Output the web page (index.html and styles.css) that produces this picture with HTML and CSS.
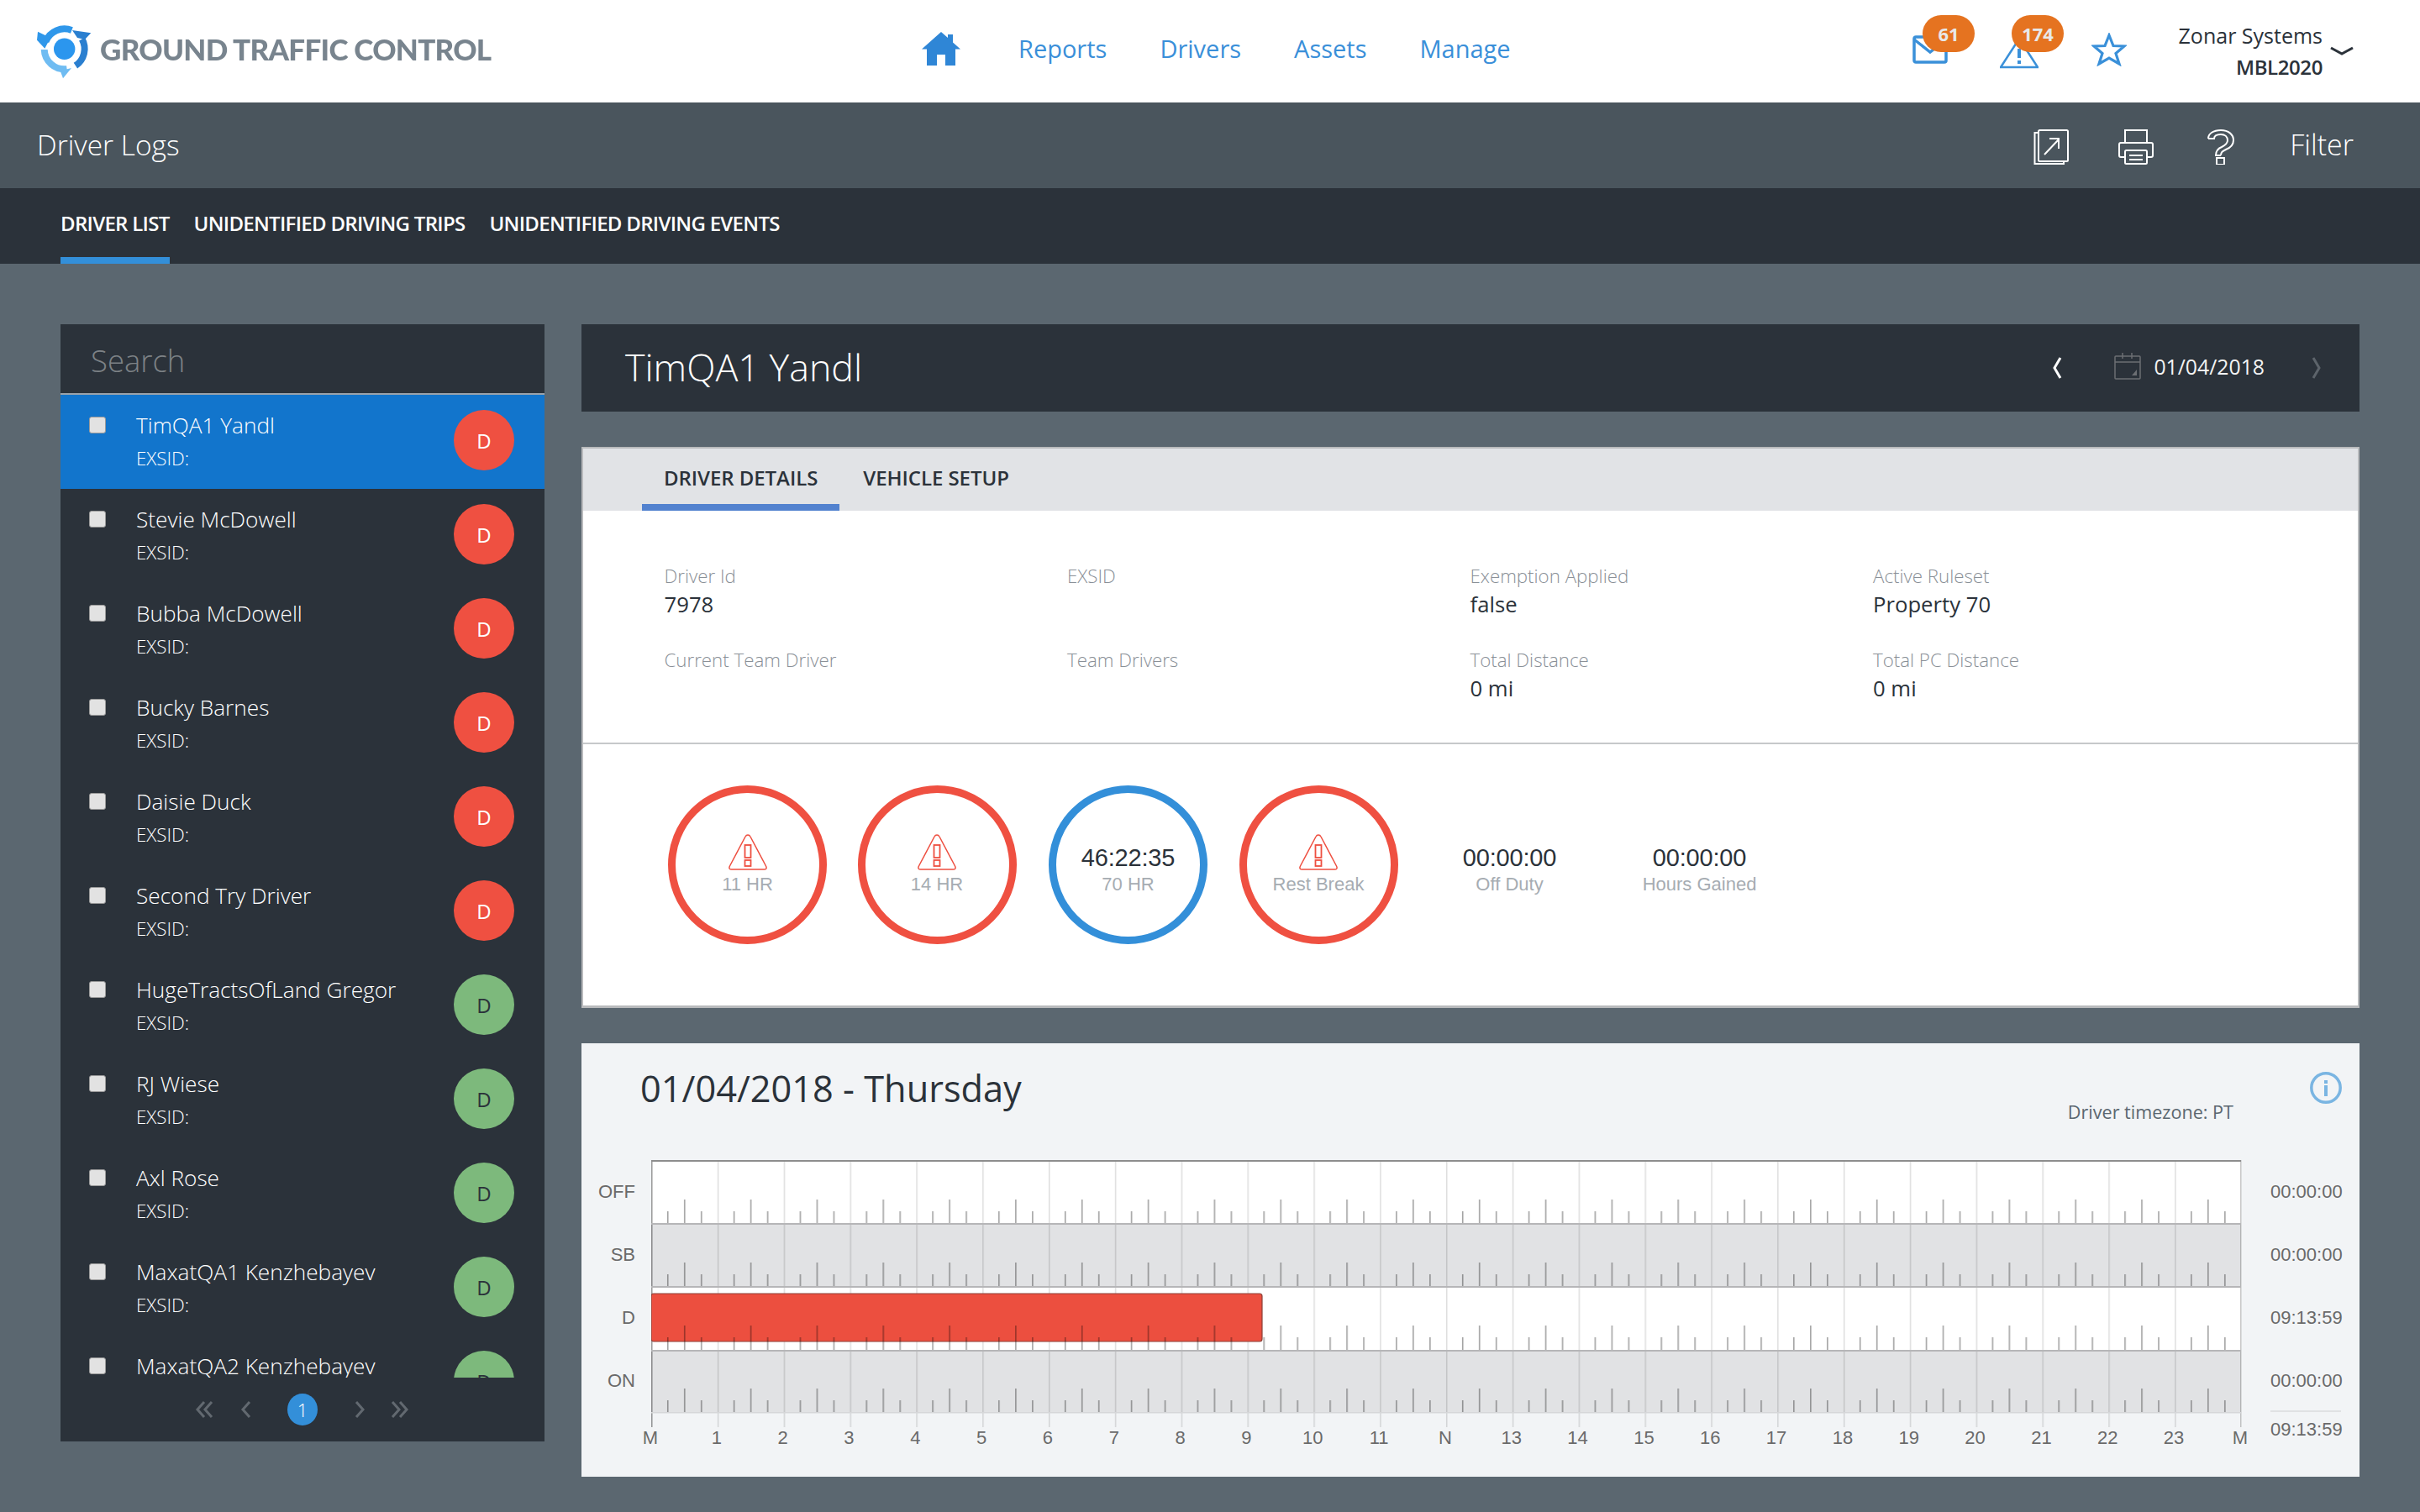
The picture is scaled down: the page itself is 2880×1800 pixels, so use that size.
FILE: index.html
```html
<!DOCTYPE html>
<html lang="en">
<head>
<meta charset="utf-8">
<title>Driver Logs</title>
<link rel="stylesheet" href="styles.css">
</head>
<body>
<header class="topbar">
  <div class="brand">
    <svg class="logo" width="68" height="68" viewBox="0 0 68 68" fill="none">
      <circle cx="32.700" cy="31.300" r="12.700" fill="#2b96ee"/>
      <path d="M10.400 22.400 A24 24 0 0 1 41.400 9" stroke="#2f97ea" stroke-width="8"/>
      <path d="M1 10.700 L0 20.700 L9.300 30.700 L16 18Z" fill="#2f97ea"/>
      <path d="M53.600 19.500 A24 24 0 0 1 45.900 51.200" stroke="#2a7fd0" stroke-width="8"/>
      <path d="M42 9 L64.300 12.300 L57 20 L48 18Z" fill="#2a7fd0"/>
      <path d="M8.700 32 A24 24 0 0 0 35.600 55.100" stroke="#6fbcf2" stroke-width="8"/>
      <path d="M27.700 57.300 L41 54 L31 66.300Z" fill="#6fbcf2"/>
    </svg>
    <span class="brand-name">GROUND TRAFFIC CONTROL</span>
  </div>
  <nav class="mainnav">
    <svg class="home" width="46" height="40" viewBox="0 0 46 40"><path d="M23 0 L31 7 V3 H37 V12.5 L46 20.5 H40 V40 H28 V27 H18 V40 H6 V20.5 H0Z" fill="#2f86d6"/></svg>
    <a>Reports</a><a>Drivers</a><a>Assets</a><a>Manage</a>
  </nav>
  <div class="tools">
    <div class="notice notice-mail">
      <svg width="42" height="34" viewBox="0 0 42 34"><rect x="2" y="2" width="38" height="30" rx="2" fill="none" stroke="#3a90d9" stroke-width="3.5"/><path d="M2 5 L21 20 L40 5" fill="none" stroke="#3a90d9" stroke-width="3.5"/></svg>
      <span class="badge">61</span>
    </div>
    <div class="notice notice-warn">
      <svg width="46" height="38" viewBox="0 0 46 38"><path d="M23 2 L45 36 H1Z" fill="none" stroke="#3a90d9" stroke-width="2.5"/><rect x="21" y="14" width="4" height="11" fill="#3a90d9"/><rect x="21" y="28" width="4" height="4" fill="#3a90d9"/></svg>
      <span class="badge">174</span>
    </div>
    <svg class="star" width="42" height="40" viewBox="0 0 42 40"><path d="M21 3 L26 15.500 L39 16 L29 24.500 L33 37 L21 30 L9 37 L13 24.500 L3 16 L16 15.500Z" fill="none" stroke="#3a90d9" stroke-width="3.200"/></svg>
    <div class="account">
      <div class="account-name">Zonar Systems</div>
      <div class="account-code">MBL2020</div>
    </div>
    <svg class="caret" width="28" height="12" viewBox="0 0 28 12"><path d="M1 2 L14 9 L27 2" fill="none" stroke="#2b323a" stroke-width="3"/></svg>
  </div>
</header>

<div class="pagebar">
  <h1>Driver Logs</h1>
  <div class="pagetools">
    <svg width="42" height="42" viewBox="0 0 42 42" fill="none" stroke="#fff" stroke-width="2"><rect x="6" y="1" width="35" height="37" rx="1.500"/><path d="M6 4 H1.500 V41 H36 V38"/><path d="M13 30 L30 12 M19 11 H30 V23"/></svg>
    <svg width="42" height="42" viewBox="0 0 42 42" fill="none" stroke="#fff" stroke-width="2"><path d="M8 16 V1 H34 V16"/><path d="M8 33 H3 Q1 33 1 31 V18 Q1 16 3 16 H39 Q41 16 41 18 V31 Q41 33 39 33 H34"/><rect x="8" y="25" width="26" height="16" rx="1.500"/><path d="M13 31 H29 M13 36 H29"/></svg>
    <svg width="32" height="42" viewBox="0 0 32 42" fill="none" stroke="#fff" stroke-width="2"><path d="M1 11 C1 5 7 1 16 1 C25 1 31 6 31 13 C31 19 27 22 22 24 C18 26 16 27 16 31 M1 11 H8 C8 8 11 6 16 6 C21 6 24 9 24 13 C24 17 21 19 17 21 C12 23 10 26 10 31 H16"/><rect x="11" y="34" width="9" height="8"/></svg>
    <span class="filter">Filter</span>
  </div>
</div>

<div class="tabbar">
  <a class="tabbar-item is-active">DRIVER LIST</a>
  <a class="tabbar-item">UNIDENTIFIED DRIVING TRIPS</a>
  <a class="tabbar-item">UNIDENTIFIED DRIVING EVENTS</a>
</div>

<div class="content">
  <aside class="sidebar">
    <div class="search">Search</div>
    <ul class="drivers">
      <li class="driver is-selected"><span class="check"></span><div class="driver-text"><div class="driver-name">TimQA1 Yandl</div><div class="driver-id">EXSID:</div></div><span class="avatar red">D</span></li>
      <li class="driver"><span class="check"></span><div class="driver-text"><div class="driver-name">Stevie McDowell</div><div class="driver-id">EXSID:</div></div><span class="avatar red">D</span></li>
      <li class="driver"><span class="check"></span><div class="driver-text"><div class="driver-name">Bubba McDowell</div><div class="driver-id">EXSID:</div></div><span class="avatar red">D</span></li>
      <li class="driver"><span class="check"></span><div class="driver-text"><div class="driver-name">Bucky Barnes</div><div class="driver-id">EXSID:</div></div><span class="avatar red">D</span></li>
      <li class="driver"><span class="check"></span><div class="driver-text"><div class="driver-name">Daisie Duck</div><div class="driver-id">EXSID:</div></div><span class="avatar red">D</span></li>
      <li class="driver"><span class="check"></span><div class="driver-text"><div class="driver-name">Second Try Driver</div><div class="driver-id">EXSID:</div></div><span class="avatar red">D</span></li>
      <li class="driver"><span class="check"></span><div class="driver-text"><div class="driver-name">HugeTractsOfLand Gregor</div><div class="driver-id">EXSID:</div></div><span class="avatar green">D</span></li>
      <li class="driver"><span class="check"></span><div class="driver-text"><div class="driver-name">RJ Wiese</div><div class="driver-id">EXSID:</div></div><span class="avatar green">D</span></li>
      <li class="driver"><span class="check"></span><div class="driver-text"><div class="driver-name">Axl Rose</div><div class="driver-id">EXSID:</div></div><span class="avatar green">D</span></li>
      <li class="driver"><span class="check"></span><div class="driver-text"><div class="driver-name">MaxatQA1 Kenzhebayev</div><div class="driver-id">EXSID:</div></div><span class="avatar green">D</span></li>
      <li class="driver"><span class="check"></span><div class="driver-text"><div class="driver-name">MaxatQA2 Kenzhebayev</div><div class="driver-id">EXSID:</div></div><span class="avatar green">D</span></li>
    </ul>
    <div class="pager">
      <svg class="pg-first" width="22" height="22" viewBox="0 0 22 22"><path d="M11 2 L3 11 L11 20 M20 2 L12 11 L20 20" fill="none" stroke="#626970" stroke-width="3"/></svg>
      <svg class="pg-prev" width="14" height="22" viewBox="0 0 14 22"><path d="M11 2 L3 11 L11 20" fill="none" stroke="#626970" stroke-width="3"/></svg>
      <span class="pg-current">1</span>
      <svg class="pg-next" width="14" height="22" viewBox="0 0 14 22"><path d="M3 2 L11 11 L3 20" fill="none" stroke="#626970" stroke-width="3"/></svg>
      <svg class="pg-last" width="22" height="22" viewBox="0 0 22 22"><path d="M2 2 L10 11 L2 20 M11 2 L19 11 L11 20" fill="none" stroke="#626970" stroke-width="3"/></svg>
    </div>
  </aside>

  <main class="main">
    <section class="titlebar">
      <h2>TimQA1 Yandl</h2>
      <div class="datepick">
        <svg class="dp-prev" width="12" height="26" viewBox="0 0 12 26"><path d="M10 1 L3 13 L10 25" fill="none" stroke="#fff" stroke-width="3"/></svg>
        <svg class="dp-cal" width="32" height="32" viewBox="0 0 32 32" fill="none" stroke="#6c6f73" stroke-width="1.500"><rect x="1" y="4" width="30" height="27" rx="1"/><path d="M1 11 H31 M10 0 V7 M21 0 V7"/><path d="M27 20 V27 H21Z" fill="#6c6f73" stroke="none"/></svg>
        <span class="dp-date">01/04/2018</span>
        <svg class="dp-next" width="12" height="26" viewBox="0 0 12 26"><path d="M2 1 L9 13 L2 25" fill="none" stroke="#5d646b" stroke-width="3"/></svg>
      </div>
    </section>

    <section class="card">
      <div class="card-tabs">
        <a class="card-tab is-active">DRIVER DETAILS</a>
        <a class="card-tab">VEHICLE SETUP</a>
      </div>
      <div class="facts">
        <div class="fact"><div class="fact-label">Driver Id</div><div class="fact-value">7978</div></div>
        <div class="fact"><div class="fact-label">EXSID</div><div class="fact-value"></div></div>
        <div class="fact"><div class="fact-label">Exemption Applied</div><div class="fact-value">false</div></div>
        <div class="fact"><div class="fact-label">Active Ruleset</div><div class="fact-value">Property 70</div></div>
        <div class="fact"><div class="fact-label">Current Team Driver</div><div class="fact-value"></div></div>
        <div class="fact"><div class="fact-label">Team Drivers</div><div class="fact-value"></div></div>
        <div class="fact"><div class="fact-label">Total Distance</div><div class="fact-value">0 mi</div></div>
        <div class="fact"><div class="fact-label">Total PC Distance</div><div class="fact-value">0 mi</div></div>
      </div>
      <div class="clocks">
        <div class="clock red-ring">
          <svg width="46" height="43" viewBox="0 0 46 43" fill="none" stroke="#ee4f40" stroke-width="1.500"><path d="M23 1 C21.500 1 20.500 2 20 3 L1.500 38 C0 41 1.500 42 3.500 42 H42.500 C44.500 42 46 41 44.500 38 L26 3 C25.500 2 24.500 1 23 1Z"/><rect x="19.500" y="13" width="7" height="15" stroke-width="1.800"/><rect x="19.500" y="31" width="7" height="7" stroke-width="1.800"/></svg>
          <div class="clock-label">11 HR</div>
        </div>
        <div class="clock red-ring">
          <svg width="46" height="43" viewBox="0 0 46 43" fill="none" stroke="#ee4f40" stroke-width="1.500"><path d="M23 1 C21.500 1 20.500 2 20 3 L1.500 38 C0 41 1.500 42 3.500 42 H42.500 C44.500 42 46 41 44.500 38 L26 3 C25.500 2 24.500 1 23 1Z"/><rect x="19.500" y="13" width="7" height="15" stroke-width="1.800"/><rect x="19.500" y="31" width="7" height="7" stroke-width="1.800"/></svg>
          <div class="clock-label">14 HR</div>
        </div>
        <div class="clock blue-ring">
          <div class="clock-time">46:22:35</div>
          <div class="clock-label">70 HR</div>
        </div>
        <div class="clock red-ring">
          <svg width="46" height="43" viewBox="0 0 46 43" fill="none" stroke="#ee4f40" stroke-width="1.500"><path d="M23 1 C21.500 1 20.500 2 20 3 L1.500 38 C0 41 1.500 42 3.500 42 H42.500 C44.500 42 46 41 44.500 38 L26 3 C25.500 2 24.500 1 23 1Z"/><rect x="19.500" y="13" width="7" height="15" stroke-width="1.800"/><rect x="19.500" y="31" width="7" height="7" stroke-width="1.800"/></svg>
          <div class="clock-label">Rest Break</div>
        </div>
        <div class="clock plain">
          <div class="clock-time">00:00:00</div>
          <div class="clock-label">Off Duty</div>
        </div>
        <div class="clock plain">
          <div class="clock-time">00:00:00</div>
          <div class="clock-label">Hours Gained</div>
        </div>
      </div>
    </section>

    <section class="logcard">
      <div class="log-head">
        <h3>01/04/2018 - Thursday</h3>
        <div class="log-meta">
          <svg class="info" width="38" height="38" viewBox="0 0 38 38"><circle cx="19" cy="19" r="17.200" fill="none" stroke="#7ab5e2" stroke-width="3.500"/><rect x="17" y="16" width="4" height="13" fill="#7ab5e2"/><rect x="17" y="10" width="4" height="4" fill="#7ab5e2"/></svg>
          <div class="tz">Driver timezone: PT</div>
        </div>
      </div>
      <div class="chart">
        <div class="chart-rows">
          <span>OFF</span><span>SB</span><span>D</span><span>ON</span>
        </div>
        <div class="chart-plot">
          <svg class="plot" width="1893" height="318" viewBox="0 0 1893 318">
            <defs>
              <pattern id="hourLines" width="78.83" height="318" patternUnits="userSpaceOnUse">
                <rect x="0" y="0" width="1.500" height="318" fill="#000" fill-opacity=".13"/>
              </pattern>
              <pattern id="ticks" width="78.83" height="75" patternUnits="userSpaceOnUse" patternTransform="translate(0 1)">
                <rect x="19" y="60" width="1.500" height="15" fill="#000" fill-opacity=".38"/>
                <rect x="39" y="46" width="1.500" height="29" fill="#000" fill-opacity=".38"/>
                <rect x="59" y="60" width="1.500" height="15" fill="#000" fill-opacity=".38"/>
              </pattern>
            </defs>
            <rect x="0" y="0" width="1892" height="76" fill="#fff"/>
            <rect x="0" y="76" width="1892" height="75" fill="#e1e2e4"/>
            <rect x="0" y="151" width="1892" height="75" fill="#fff"/>
            <rect x="0" y="226" width="1892" height="75" fill="#e1e2e4"/>
            <rect x="0" y="0" width="1892" height="318" fill="url(#hourLines)"/>
            <rect x="0" y="0" width="1.500" height="318" fill="#000" fill-opacity=".3"/>
            <rect x="1891" y="0" width="1.500" height="318" fill="#000" fill-opacity=".2"/>
            <rect x="0" y="159" width="727" height="57" rx="3" fill="#ec4f3f" stroke="#8b4038" stroke-width="1.200"/>
            <rect x="0" y="0" width="1892" height="301" fill="url(#ticks)"/>
            <rect x="0" y="0" width="1892" height="2" fill="#8d8d8d"/>
            <rect x="0" y="75" width="1892" height="2" fill="#b6b6b8"/>
            <rect x="0" y="150" width="1892" height="2" fill="#b6b6b8"/>
            <rect x="0" y="226" width="1892" height="2" fill="#b6b6b8"/>
            <rect x="0" y="300" width="1892" height="1.500" fill="#d6d7d9"/>
          </svg>
          <div class="hours">
            <span>M</span><span>1</span><span>2</span><span>3</span><span>4</span><span>5</span><span>6</span><span>7</span><span>8</span><span>9</span><span>10</span><span>11</span><span>N</span><span>13</span><span>14</span><span>15</span><span>16</span><span>17</span><span>18</span><span>19</span><span>20</span><span>21</span><span>22</span><span>23</span><span>M</span>
          </div>
        </div>
        <div class="chart-totals">
          <span>00:00:00</span><span>00:00:00</span><span>09:13:59</span><span>00:00:00</span>
          <span class="grand">09:13:59</span>
        </div>
      </div>
    </section>
  </main>
</div>
</body>
</html>
```
FILE: styles.css
```css
* { box-sizing: border-box; }
html, body { margin: 0; padding: 0; }
body {
  width: 2880px;
  height: 1800px;
  overflow: hidden;
  background: #5b6770;
  font-family: "Open Sans", "Liberation Sans", sans-serif;
  color: #2b323a;
}
h1, h2, h3 { margin: 0; font-weight: 300; }
ul { list-style: none; margin: 0; padding: 0; }

/* top bar */
.topbar {
  height: 122px;
  background: #fff;
  display: flex;
  align-items: center;
}
.brand { display: flex; align-items: center; padding-left: 44px; width: 1097px; padding-bottom: 6px; }
.logo { flex: none; margin-right: 7px; margin-top: 6px; filter: blur(.5px); }
.brand-name {
  font-family: "Lato", sans-serif;
  font-weight: 900;
  font-size: 35px;
  letter-spacing: -.72px;
  color: #78848e;
  white-space: nowrap;
  filter: blur(.5px);
}
.mainnav { display: flex; align-items: center; gap: 63px; font-size: 29px; color: #3a8fd9; padding-bottom: 8px; }
.home { margin-right: 6px; margin-top: 2px; }
.tools { margin-left: auto; height: 122px; display: flex; align-items: flex-start; padding-right: 79px; }
.notice { position: relative; display: flex; }
.notice-mail { margin-right: 62px; margin-top: 42px; }
.notice-warn { margin-right: 63px; margin-top: 44px; }
.badge {
  position: absolute;
  top: -24px;
  left: 12px;
  width: 62px;
  height: 44px;
  border-radius: 22px;
  background: #e57320;
  color: #e8e8e8;
  font-size: 22px;
  font-weight: 700;
  line-height: 44px;
  text-align: center;
}
.notice-warn .badge { top: -26px; left: 14px; }
.star { margin-right: 61px; margin-top: 39px; flex: none; }
.account { text-align: right; font-size: 25px; line-height: 36px; margin-top: 24px; width: 172px; white-space: nowrap; display: flex; flex-direction: column; align-items: flex-end; }
.account-code { font-weight: 600; font-size: 24px; letter-spacing: -.4px; margin-top: 2px; }
.caret { margin-left: 9px; margin-top: 55px; flex: none; }

/* page bar */
.pagebar {
  height: 102px;
  background: #4a555d;
  display: flex;
  align-items: center;
  justify-content: space-between;
  padding: 0 79px 0 44px;
}
.pagebar h1 { font-size: 33.500px; color: #fff; margin-bottom: 2px; }
.pagetools { display: flex; align-items: center; color: #fff; }
.pagetools svg { margin-top: 3px; }
.pagetools svg:nth-child(1) { margin-right: 59px; }
.pagetools svg:nth-child(2) { margin-right: 64px; }
.pagetools svg:nth-child(3) { margin-right: 66px; }
.filter { font-size: 34px; font-weight: 300; margin-bottom: 2px; }

/* tab bar */
.tabbar {
  height: 90px;
  background: #2b323a;
  display: flex;
  gap: 29px;
  padding-left: 72px;
}
.tabbar-item {
  height: 90px;
  line-height: 84px;
  color: #fff;
  font-size: 24px;
  font-weight: 600;
  letter-spacing: -.7px;
  white-space: nowrap;
}
.tabbar-item.is-active { border-bottom: 8px solid #338fd9; }

/* content */
.content { display: flex; gap: 44px; padding: 72px 72px 0; }
.sidebar {
  width: 576px;
  height: 1330px;
  background: #2b323a;
  display: flex;
  flex-direction: column;
  flex: none;
}
.search {
  height: 84px;
  padding: 19px 0 0 36px;
  font-size: 36.500px;
  font-weight: 300;
  line-height: 48px;
  color: #7d8286;
  border-bottom: 2px solid #9aa3ab;
}
.drivers { height: 1170px; overflow: hidden; flex: none; }
.driver { height: 112px; display: flex; color: #fff; padding: 26px 36px 0 34px; }
.driver.is-selected { background: #1275cc; }
.check {
  width: 20px;
  height: 20px;
  border-radius: 3px;
  background: #e2e2e2;
  border: 1.500px solid #9a9a9a;
  flex: none;
  margin-right: 36px;
}
.driver-text { flex: 1; }
.driver-name { font-size: 26.200px; font-weight: 300; line-height: 30px; margin-top: -5px; }
.driver-id { font-size: 22.300px; font-weight: 300; line-height: 30px; margin-top: 10px; }
.avatar {
  width: 72px;
  height: 72px;
  border-radius: 50%;
  flex: none;
  margin-top: -8px;
  font-size: 24px;
  line-height: 74px;
  text-align: center;
}
.avatar.red { background: #ef5041; color: #fff; }
.avatar.green { background: #7db97c; color: #2b323a; }
.pager {
  flex: 1;
  display: flex;
  align-items: center;
  padding-left: 160px;
}
.pg-first { margin-right: 32px; }
.pg-prev { margin-right: 42px; }
.pg-current {
  width: 36px;
  height: 38px;
  border-radius: 50%;
  background: #338fd9;
  color: #fff;
  font-size: 22px;
  font-weight: 300;
  line-height: 38px;
  text-align: center;
  margin-right: 43px;
}
.pg-next { margin-right: 30px; }

/* main */
.main { flex: 1; display: flex; flex-direction: column; gap: 42px; min-width: 0; }
.titlebar {
  height: 104px;
  background: #2b323a;
  display: flex;
  align-items: center;
  justify-content: space-between;
  padding: 0 45px 0 52px;
  color: #fff;
}
.titlebar h2 { font-size: 44.800px; line-height: 60px; margin-top: -3px; }
.datepick { display: flex; align-items: center; }
.dp-prev { margin-right: 62px; }
.dp-cal { margin-right: 15px; margin-top: -4px; }
.dp-date { font-size: 24.800px; margin-right: 56px; font-weight: 400; color: #f4f4f4; margin-bottom: 5px; }

.card {
  height: 668px;
  background: #fff;
  border: 2px solid #b9bbbd;
  border-bottom-width: 3px;
  display: flex;
  flex-direction: column;
}
.card-tabs {
  height: 74px;
  background: #e1e3e6;
  display: flex;
  gap: 28px;
  padding-left: 70px;
  flex: none;
}
.card-tab {
  height: 74px;
  padding: 0 26px;
  margin-right: -26px;
  line-height: 69px;
  font-size: 24px;
  font-weight: 600;
  letter-spacing: -.06px;
  color: #2b323a;
  white-space: nowrap;
}
.card-tab.is-active { border-bottom: 8px solid #5282cf; }
.facts {
  height: 278px;
  flex: none;
  display: grid;
  grid-template-columns: repeat(4, 479.500px);
  grid-template-rows: 100px 100px;
  padding: 63px 0 0 96.500px;
  border-bottom: 2px solid #c6c8ca;
}
.fact-label { font-size: 22.300px; font-weight: 300; color: #8a9097; line-height: 30px; }
.fact-value { font-size: 25.700px; color: #2b323a; line-height: 36px; margin-top: 1px; font-weight: 400; }

.clocks { flex: 1; display: flex; align-items: flex-start; padding: 49px 0 0 101px; font-family: "Liberation Sans", sans-serif; }
.clock {
  width: 189px;
  height: 189px;
  border-radius: 50%;
  margin-right: 37.500px;
  display: flex;
  flex-direction: column;
  align-items: center;
  border: 9px solid transparent;
  flex: none;
}
.clock:nth-child(1) { margin-right: 36.500px; }
.clock:nth-child(2) { margin-right: 38.500px; }
.clock:nth-child(4) { margin-right: 38.500px; }
.red-ring { border-color: #ef5041; padding-top: 49px; }
.blue-ring { border-color: #338fd9; padding-top: 60px; }
.clock.plain { padding-top: 60px; margin-right: 37px; }
.clock-time { font-size: 29px; line-height: 34px; color: #2b323a; letter-spacing: -.2px; }
.clock-label { font-size: 22px; line-height: 26px; color: #a6acb2; margin-top: 2px; white-space: nowrap; }
.red-ring .clock-label { margin-top: 4px; }

.logcard {
  height: 516px;
  background: #f2f4f6;
  display: flex;
  flex-direction: column;
}
.log-head { height: 139px; display: flex; justify-content: space-between; padding: 24px 21px 0 70px; flex: none; }
.log-head h3 { font-size: 43.300px; font-weight: 400; line-height: 60px; color: #2b323a; }
.log-meta { display: flex; flex-direction: column; align-items: flex-end; padding-top: 10px; }
.tz { font-size: 21.600px; line-height: 30px; color: #5b6770; margin-right: 129px; margin-top: -5px; }
.info { flex: none; }
.chart { display: flex; }
.chart-rows {
  width: 83px;
  padding-right: 19px;
  flex: none;
  display: flex;
  flex-direction: column;
  text-align: right;
  font-family: "Liberation Sans", sans-serif;
  font-size: 22px;
  color: #6a6a6a;
}
.chart-rows span { height: 75px; line-height: 75px; }
.chart-plot { width: 1893px; flex: none; }
.plot { display: block; }
.hours {
  display: flex;
  justify-content: space-between;
  width: 1892px;
  margin-left: -1px;
  font-family: "Liberation Sans", sans-serif;
  font-size: 22px;
  color: #6a6a6a;
}
.hours span { width: 0; display: flex; justify-content: center; line-height: 26px; white-space: nowrap; }
.chart-totals {
  width: 84px;
  margin-left: 34px;
  flex: none;
  display: flex;
  flex-direction: column;
  font-family: "Liberation Sans", sans-serif;
  font-size: 22px;
  color: #6a6a6a;
}
.chart-totals span { height: 75px; line-height: 75px; }
.chart-totals .grand { height: 44px; line-height: 42px; border-top: 2px solid #e0e1e3; margin-top: -2px; }
```
